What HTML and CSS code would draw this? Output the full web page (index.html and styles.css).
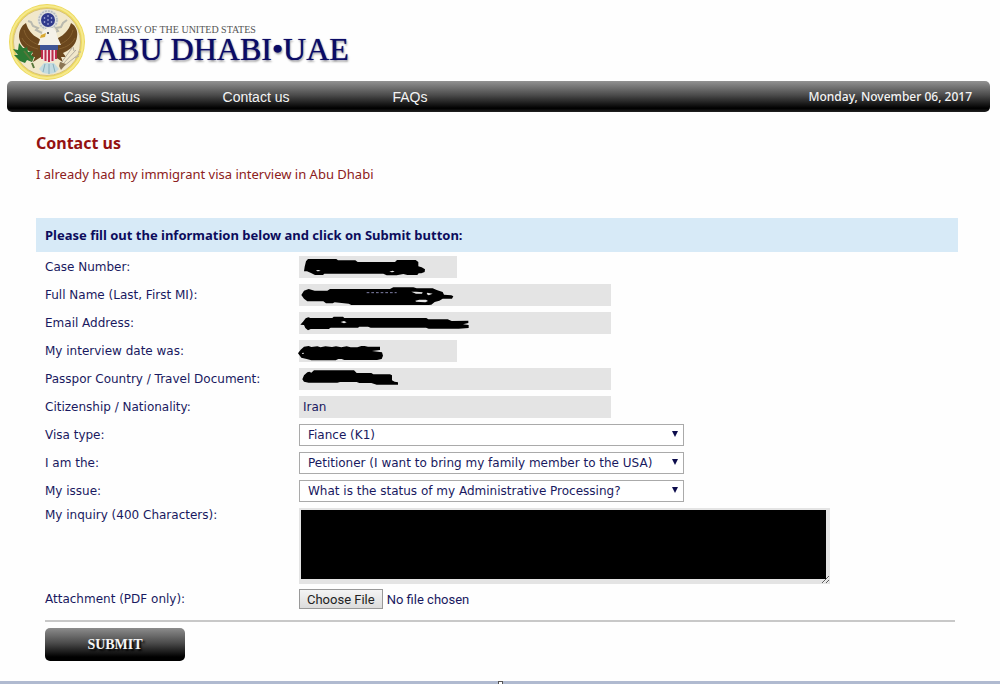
FILE: index.html
```html
<!DOCTYPE html>
<html lang="en">
<head>
    <meta charset="UTF-8">
    <meta name="viewport" content="width=device-width, initial-scale=1.0">
    <title>Contact us - Embassy of the United States, Abu Dhabi</title>
    <link rel="stylesheet" href="styles.css">
</head>
<body>
    <header class="header">
        <svg class="seal" viewBox="0 0 78 78" role="img" aria-label="Seal">
            <circle cx="39" cy="39" r="38" fill="#ecd95c"/>
            <circle cx="39" cy="39" r="36" fill="none" stroke="#f6e98c" stroke-width="2"/>
            <circle cx="39" cy="39" r="33.5" fill="#f1e8cb" stroke="#d9c27a" stroke-width="1"/>
            <circle cx="40" cy="17" r="10.5" fill="#dfe0dc"/>
            <circle cx="40" cy="17" r="9" fill="none" stroke="#b4babd" stroke-width="1.5" stroke-dasharray="2 1"/>
            <circle cx="40" cy="17" r="7" fill="#303a8c"/>
            <g fill="#c9cdf0">
                <circle cx="40" cy="13" r="0.8"/><circle cx="36.500" cy="15" r="0.8"/><circle cx="43.500" cy="15" r="0.8"/>
                <circle cx="40" cy="17" r="0.8"/><circle cx="36.500" cy="19" r="0.8"/><circle cx="43.500" cy="19" r="0.8"/><circle cx="40" cy="21" r="0.8"/>
            </g>
            <!-- ribbon -->
            <path d="M20 18l3 1 2 4 5 2-2 2 6 3M59 17l-4 3-2 4-5 1 2 3-6 2" fill="none" stroke="#b9b9ae" stroke-width="2"/>
            <!-- wings and tail -->
            <path d="M18 20c-5 3-7 8-7 14 1 7 5 11 10 14l4 2-3 4 5 0-2 5 8-5 2-15-5-4c-6-3-10-8-12-15z" fill="#6b471d"/>
            <path d="M63 20c5 3 7 8 6 14-1 7-5 11-10 14l-4 2 3 4-5 0 2 5-8-5-2-15 5-4c6-3 11-8 13-15z" fill="#6b471d"/>
            <path d="M16 27c2 8 7 12 15 15M14 35c3 6 8 9 16 11M65 27c-2 8-7 12-15 15M67 35c-3 6-8 9-16 11" fill="none" stroke="#85602f" stroke-width="1"/>
            <path d="M36 60l-5 6 4 4 6 1 6-1 4-4-5-6z" fill="#c2dbe1"/>
            <path d="M41 61v10M37 61l-2 8M45 61l2 8" stroke="#86aeb9" stroke-width="1"/>
            <!-- head and neck -->
            <path d="M30 42l3-8 2-6 4-3 6 0 3 3 1 5 4 9z" fill="#f4f1e8"/>
            <path d="M38 30l-5 2-1 3 5-1z" fill="#d8a830"/>
            <circle cx="40" cy="30" r="1" fill="#333"/>
            <!-- shield -->
            <path d="M33 43h16v11c0 3-4 5-8 5s-8-2-8-5z" fill="#f2dde0"/>
            <path d="M34 46v10M37.500 46v12M41 46v13M44.500 46v12M48 46v10" stroke="#bd2c4b" stroke-width="2"/>
            <path d="M32 42h18v5H32z" fill="#3f5596"/>
            <!-- olive branch and arrows -->
            <path d="M11 40l4 5 3 0 1-2 1 6 5-1-2 4 3 2-2 5-5-2-2 3-5-2-6-6 4 0-5-6 5 1z" fill="#2c7a34"/>
            <path d="M16 48l8 10M24 60l2 5" stroke="#58773a" stroke-width="2"/>
            <path d="M54 62l14-15M56 63l15-12M53 60l11-15M65 44l1 4M70 49l3 0M71 53l-4 2" stroke="#b3ac9e" stroke-width="1"/>
            <path d="M52 59l6 2-5 6-2-4z" fill="#8b7654"/>
        </svg>
        <div class="brand">
            <p class="brand-top">EMBASSY OF THE UNITED STATES</p>
            <p class="brand-name">ABU DHABI•UAE</p>
        </div>
    </header>

    <nav class="navbar">
        <ul class="nav-links">
            <li><a href="#">Case Status</a></li>
            <li><a href="#">Contact us</a></li>
            <li><a href="#">FAQs</a></li>
        </ul>
        <span class="date">Monday, November 06, 2017</span>
    </nav>

    <main class="content">
        <h1>Contact us</h1>
        <p class="subtitle">I already had my immigrant visa interview in Abu Dhabi</p>

        <h2 class="form-title">Please fill out the information below and click on Submit button:</h2>

        <form class="form">
            <div class="form-row">
                <label for="case-number">Case Number:</label>
                <div class="field short">
                    <input type="text" id="case-number">
                    <svg class="marker" viewBox="27 18 600 66">
                        <path d="M42 64l2-14 4-16 6-7h85l5 4h52l7 5h112l6-6h56l8 6v13l10 3 10 6-1 8-10 4h-8l-4 5h-30l-12-3-12 2-8 2h-30l-10-5H103l-4 4H75l-12-6-12-5z"/>
                        <path class="gap" d="M78 61l8-1 6 3-10 1zM298 65l10-3 6 3-8 2z"/>
                    </svg>
                </div>
            </div>
            <div class="form-row">
                <label for="full-name">Full Name (Last, First MI):</label>
                <div class="field">
                    <input type="text" id="full-name">
                    <svg class="marker" viewBox="27 102 600 66">
                        <path d="M34 135l8-13 14-5 18 5h38l8-5h180l10-5h60l10 3h48l12 5 18 6 4 8 22 2 6 3-4 7h-28l-10 6-14 4-10 8-8 1H184l-8-4-42-4-6 3h-20l-8-6H52l-10-8z"/>
                        <path class="gap" d="M364 125h14l20 2-2 4h-18zM412 128l16 3-12 5-6-4zM376 152l12-3h20l6 4-8 4-28-2z"/>
                        <path class="ink" d="M230 128h90"/>
                    </svg>
                </div>
            </div>
            <div class="form-row">
                <label for="email">Email Address:</label>
                <div class="field">
                    <input type="email" id="email">
                    <svg class="marker" viewBox="27 186 600 66">
                        <path d="M31 224l8-9 8-10 8-3 6 2h66l4-4h28l4 4h246l6 4h58l12 5 50-1v7l-16 4 17 2v9l-30 2h-90l-8-3H242l-8-3h-26l-4 3h-82l-6 4H62l-8 4-8-7-4-9z"/>
                        <path class="gap" d="M152 216l10-3 8 4-8 3z"/>
                    </svg>
                </div>
            </div>
            <div class="form-row">
                <label for="interview-date">My interview date was:</label>
                <div class="field short">
                    <input type="text" id="interview-date">
                    <svg class="marker" viewBox="27 270 600 66">
                        <path d="M24 310l8-11 10-9 14-2 8 3 18-2 10 3 14-3 20 2 12-2 16 3 16-3 12 3h20l12-4h10l10 2h36v10l-24 3 30 4 3 10-4 10-14 3h-98l-8-3h-10l-8 4H64l-14-4-16-4z"/>
                        <path class="gap" d="M36 309l5-1v4h-4z"/>
                    </svg>
                </div>
            </div>
            <div class="form-row">
                <label for="passport-country">Passpor Country / Travel Document:</label>
                <div class="field">
                    <input type="text" id="passport-country">
                    <svg class="marker" viewBox="27 354 600 66">
                        <path d="M37 388l5-12 10-9 6-2 6 3 8-7h120l8 8h44l6 4h50l6 3v15l8 4 10 2v7h-64l-16-5h-36l-8-3H150l-8 2H56l-14-3z"/>
                    </svg>
                </div>
            </div>
            <div class="form-row">
                <label for="nationality">Citizenship / Nationality:</label>
                <div class="field">
                    <input type="text" id="nationality" value="Iran">
                </div>
            </div>
            <div class="form-row">
                <label for="visa-type">Visa type:</label>
                <div class="select">
                    <select id="visa-type">
                        <option>Fiance (K1)</option>
                    </select>
                </div>
            </div>
            <div class="form-row">
                <label for="role">I am the:</label>
                <div class="select">
                    <select id="role">
                        <option>Petitioner (I want to bring my family member to the USA)</option>
                    </select>
                </div>
            </div>
            <div class="form-row">
                <label for="issue">My issue:</label>
                <div class="select">
                    <select id="issue">
                        <option>What is the status of my Administrative Processing?</option>
                    </select>
                </div>
            </div>
            <div class="form-row inquiry-row">
                <label for="inquiry">My inquiry (400 Characters):</label>
                <textarea id="inquiry" maxlength="400"></textarea>
            </div>
            <div class="form-row">
                <label for="attachment">Attachment (PDF only):</label>
                <input type="file" id="attachment" accept="application/pdf">
            </div>
            <hr>
            <button type="submit" class="submit-btn">SUBMIT</button>
        </form>
    </main>

    <footer class="footer"><span class="handle"></span></footer>
</body>
</html>
```
FILE: styles.css
```css
* {
    margin: 0;
    padding: 0;
    box-sizing: border-box;
}

body {
    font-family: Verdana, 'DejaVu Sans', sans-serif;
    font-size: 12px;
    color: #191960;
    background: #fefefe;
    min-height: 100vh;
    display: flex;
    flex-direction: column;
}

.header {
    display: flex;
    align-items: flex-start;
    height: 81px;
    padding: 3px 8px 0;
}

.seal {
    width: 78px;
    height: 78px;
}

.brand {
    padding: 20px 0 0 9px;
    font-family: 'Times New Roman', 'Liberation Serif', serif;
}

.brand-top {
    font-size: 10px;
    line-height: 13px;
    color: #555;
}

.brand-name {
    font-size: 32px;
    line-height: 26px;
    color: #0b0b66;
    text-shadow: 0 0 1px #0b0b66, 1px 2px 2px #aaa;
}

.navbar {
    display: flex;
    align-items: center;
    justify-content: space-between;
    height: 31px;
    margin: 0 10px 0 7px;
    padding: 0 18px;
    border-radius: 5px;
    background: linear-gradient(#929292, #4c4c4c 45%, #000 88%, #222);
    color: #f4f4f4;
}

.nav-links {
    display: flex;
    list-style: none;
}

.nav-links li {
    width: 154px;
    text-align: center;
}

.nav-links a {
    font-family: Arial, 'Liberation Sans', sans-serif;
    font-size: 14px;
    color: #f4f4f4;
    text-decoration: none;
}

.date {
    font-family: 'Noto Sans', sans-serif;
    font-weight: 500;
}

.content {
    flex: 1;
    padding: 20px 42px 16px 36px;
}

h1 {
    font-family: 'Trebuchet MS', 'Noto Sans', sans-serif;
    font-size: 16px;
    line-height: 22px;
    color: #941212;
}

.subtitle {
    margin-top: 12px;
    font-family: 'Noto Sans', sans-serif;
    font-size: 13px;
    line-height: 16px;
    color: #8c2020;
}

.form-title {
    margin-top: 36px;
    padding: 0 9px;
    background: #d7eaf7;
    color: #0c0c5c;
    font-family: 'Noto Sans', sans-serif;
    font-size: 13px;
    line-height: 34px;
}

.form {
    padding: 4px 3px 0 9px;
}

.form-row {
    display: flex;
    align-items: center;
    min-height: 22px;
    margin-bottom: 6px;
}

.form-row label {
    flex: none;
    width: 254px;
}

.field {
    position: relative;
    width: 312px;
}

.field.short {
    width: 158px;
}

.field input {
    display: block;
    width: 100%;
    height: 22px;
    padding: 0 4px;
    border: none;
    background: #e4e4e4;
    font: inherit;
    color: inherit;
}

.marker {
    position: absolute;
    top: 0;
    left: 0;
    width: 200px;
    height: 22px;
    overflow: visible;
    pointer-events: none;
}

.marker .gap {
    fill: #e4e4e4;
}

.marker .ink {
    stroke: #8080a8;
    stroke-width: 3;
    stroke-dasharray: 8 6;
}

.select {
    position: relative;
    width: 385px;
}

.select::after {
    content: "";
    position: absolute;
    top: 7px;
    right: 6px;
    border: 3px solid transparent;
    border-top: 6px solid #0c0c4c;
    border-bottom: none;
    pointer-events: none;
}

.select select {
    display: block;
    appearance: none;
    width: 100%;
    height: 22px;
    padding: 0 8px;
    border: 1px solid #aaa;
    border-radius: 0;
    background: #fff;
    font: inherit;
    color: inherit;
}

.inquiry-row {
    align-items: flex-start;
    margin-bottom: 4px;
}

.inquiry-row textarea {
    width: 531px;
    height: 76px;
    padding: 2px 4px 5px 2px;
    border: none;
    background: linear-gradient(#000, #000) content-box, #e4e4e4;
    font: inherit;
    color: #fff;
}

input[type="file"] {
    font-family: Roboto, sans-serif;
    font-size: 13px;
    height: 20px;
}

input[type="file"]::file-selector-button {
    height: 20px;
    margin-right: 4px;
    padding: 0 7px;
    border: 1px solid #999;
    border-radius: 0;
    background: linear-gradient(#f4f4f4, #dcdcdc);
    font: inherit;
    color: #222;
}

hr {
    margin-top: 10px;
    border: none;
    border-top: 2px solid #c8c8c8;
}

.submit-btn {
    display: block;
    width: 140px;
    height: 33px;
    margin-top: 6px;
    border: none;
    border-radius: 5px;
    background: linear-gradient(#8c8c8c, #4c4c4c 45%, #000 88%);
    font-family: 'Times New Roman', 'Liberation Serif', serif;
    font-size: 14px;
    font-weight: bold;
    color: #f4f4f4;
    text-shadow: 2px 2px 2px #000;
}

.footer {
    display: flex;
    justify-content: center;
    height: 3px;
    background: #b0bad0;
}

.handle {
    width: 5px;
    border: 1px solid #555;
    border-bottom: none;
    background: #fff;
}
```
